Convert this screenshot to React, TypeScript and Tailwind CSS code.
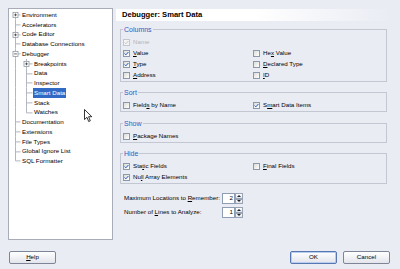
import React from "react";

type TreeNode = {
  label: string;
  level: 0 | 1;
  exp?: "+" | "-";
  first?: boolean;
  last?: boolean;
  selected?: boolean;
};

const nodes: TreeNode[] = [
  { label: "Environment", level: 0, exp: "+", first: true },
  { label: "Accelerators", level: 0 },
  { label: "Code Editor", level: 0, exp: "+" },
  { label: "Database Connections", level: 0 },
  { label: "Debugger", level: 0, exp: "-" },
  { label: "Breakpoints", level: 1, exp: "+" },
  { label: "Data", level: 1 },
  { label: "Inspector", level: 1 },
  { label: "Smart Data", level: 1, selected: true },
  { label: "Stack", level: 1 },
  { label: "Watches", level: 1, last: true },
  { label: "Documentation", level: 0 },
  { label: "Extensions", level: 0 },
  { label: "File Types", level: 0 },
  { label: "Global Ignore List", level: 0 },
  { label: "SQL Formatter", level: 0, last: true },
];

const H = 9.75;
const C = H / 2;
const LINE = "#b2b6be";

function ExpBox({ cx, sign }: { cx: number; sign: "+" | "-" }) {
  return (
    <g>
      <rect x={cx - 2.5} y={C - 2.5} width={5} height={5} fill="#fff" stroke="#8e98a4" strokeWidth={0.8} />
      <line x1={cx - 1.4} y1={C} x2={cx + 1.4} y2={C} stroke="#2a2a2a" strokeWidth={0.7} />
      {sign === "+" && <line x1={cx} y1={C - 1.4} x2={cx} y2={C + 1.4} stroke="#2a2a2a" strokeWidth={0.7} />}
    </g>
  );
}

function Gutter0({ n }: { n: TreeNode }) {
  const x = 6.5;
  const isChild = n.level === 1;
  return (
    <svg width={12} height={H} className="shrink-0 block">
      <line x1={x} y1={n.first ? C : 0} x2={x} y2={n.last && !isChild ? C : H} stroke={LINE} strokeWidth={1} />
      {!isChild && <line x1={x} y1={C} x2={11.5} y2={C} stroke={LINE} strokeWidth={1} />}
      {!isChild && n.exp && <ExpBox cx={x} sign={n.exp} />}
    </svg>
  );
}

function Gutter1({ n }: { n: TreeNode }) {
  const x = 5.5;
  return (
    <svg width={12} height={H} className="shrink-0 block">
      <line x1={x} y1={0} x2={x} y2={n.last ? C : H} stroke={LINE} strokeWidth={1} />
      <line x1={x} y1={C} x2={11.5} y2={C} stroke={LINE} strokeWidth={1} />
      {n.exp && <ExpBox cx={x} sign={n.exp} />}
    </svg>
  );
}

function Tree() {
  return (
    <div className="relative w-[105px] h-[232px] bg-white border border-[#a7acb8] pt-[1px] shrink-0">
      {nodes.map((n) => (
        <div key={n.label} className="flex items-center h-[9.75px]">
          <Gutter0 n={n} />
          {n.level === 1 && <Gutter1 n={n} />}
          <span
            className={`px-[1px] h-[9.75px] flex items-center text-[6.2px] leading-none whitespace-nowrap ${
              n.selected ? "bg-[#316ac5] text-white" : "text-black"
            }`}
          >
            {n.label}
          </span>
        </div>
      ))}
      <svg width={9} height={14} viewBox="0 0 9 14" className="absolute left-[75px] top-[100px]">
        <path d="M0.5 0.5 L0.5 10.5 L3 8.3 L4.7 12.5 L6.3 11.8 L4.6 7.7 L7.8 7.7 Z" fill="#fff" stroke="#000" strokeWidth={0.8} strokeLinejoin="round" />
      </svg>
    </div>
  );
}

function CheckBox({ checked, disabled }: { checked?: boolean; disabled?: boolean }) {
  return (
    <span
      className={`w-[7px] h-[7px] shrink-0 border flex items-center justify-center ${
        disabled
          ? "border-[#c4c7cd] bg-[#f4f4f4]"
          : "border-[#8d98ab] bg-gradient-to-br from-[#dcdcd6] to-white"
      }`}
    >
      {checked && (
        <svg width={5} height={5} viewBox="0 0 5 5">
          <path d="M0.6 2.5 L1.9 3.8 L4.4 1" fill="none" stroke={disabled ? "#c2c2c2" : "#2257c0"} strokeWidth={1} />
        </svg>
      )}
    </span>
  );
}

function Check({
  children,
  checked,
  disabled,
}: {
  children: React.ReactNode;
  checked?: boolean;
  disabled?: boolean;
}) {
  return (
    <div className="flex items-center h-[11px] gap-[3px]">
      <CheckBox checked={checked} disabled={disabled} />
      <span className={`text-[6.2px] leading-none whitespace-nowrap ${disabled ? "text-[#b4b4b4]" : "text-black"}`}>
        {children}
      </span>
    </div>
  );
}

function Group({
  title,
  children,
  className,
}: {
  title: string;
  children: React.ReactNode;
  className: string;
}) {
  return (
    <fieldset className={`mx-[4px] border border-[#c3c7d2] px-[2px] pt-[3px] pb-0 ${className}`}>
      <legend className="px-[1px] text-[7px] leading-[9px] text-[#2d5cc0]">{title}</legend>
      {children}
    </fieldset>
  );
}

function Spinner({ value }: { value: string }) {
  return (
    <div className="flex h-[11px]">
      <div className="w-[13px] h-[11px] bg-white border border-[#8f9db4] flex items-center justify-end pr-[1px] text-[6.2px] leading-none">
        {value}
      </div>
      <div className="w-[8px] h-[11px] flex flex-col">
        {[0, 1].map((i) => (
          <div
            key={i}
            className="h-[5.5px] border border-[#9aa3b3] bg-gradient-to-b from-white to-[#dfe2ea] flex items-center justify-center"
          >
            <svg width={4} height={2} viewBox="0 0 4 2">
              <path d={i === 0 ? "M0 2 L2 0 L4 2 Z" : "M0 0 L2 2 L4 0 Z"} fill="#222" />
            </svg>
          </div>
        ))}
      </div>
    </div>
  );
}

function Btn({ children, def }: { children: React.ReactNode; def?: boolean }) {
  return (
    <div
      className={`w-[47px] h-[13px] rounded-[2px] border flex items-center justify-center text-[6.2px] leading-none text-black bg-gradient-to-b from-white to-[#e3e5ec] ${
        def ? "border-[#5677b0] shadow-[inset_0_0_0_1px_#b8cdf0]" : "border-[#7e8596]"
      }`}
    >
      {children}
    </div>
  );
}

export default function App() {
  return (
    <div className="w-[400px] h-[269px] bg-[#eaecf4] flex flex-col overflow-hidden font-['Liberation_Sans',Arial,sans-serif] text-black">
      <div className="flex pt-[8px] pl-[8px] h-[240px]">
        <Tree />
        <div className="ml-[3px] w-[275px] flex flex-col pt-[1px]">
          <div className="h-[12px] flex items-center pl-[6px] bg-gradient-to-r from-white via-white to-[#eaecf4] text-[7.6px] font-bold leading-none">
            Debugger: Smart Data
          </div>

          <Group title="Columns" className="mt-[4px]">
            <div className="grid grid-cols-[130px_1fr]">
              <Check checked disabled>Name</Check>
              <div />
              <Check checked><u>V</u>alue</Check>
              <Check>He<u>x</u> Value</Check>
              <Check checked><u>T</u>ype</Check>
              <Check><u>D</u>eclared Type</Check>
              <Check><u>A</u>ddress</Check>
              <Check><u>I</u>D</Check>
            </div>
          </Group>

          <Group title="Sort" className="mt-[6px]">
            <div className="grid grid-cols-[130px_1fr]">
              <Check>Field<u>s</u> by Name</Check>
              <Check checked>S<u>m</u>art Data Items</Check>
            </div>
          </Group>

          <Group title="Show" className="mt-[7px]">
            <div className="grid grid-cols-[130px_1fr]">
              <Check><u>P</u>ackage Names</Check>
            </div>
          </Group>

          <Group title="Hide" className="mt-[6px]">
            <div className="grid grid-cols-[130px_1fr]">
              <Check checked>Sta<u>t</u>ic Fields</Check>
              <Check><u>F</u>inal Fields</Check>
              <Check checked>Nu<u>l</u>l Array Elements</Check>
            </div>
          </Group>

          <div className="mt-[9px] ml-[8px] flex flex-col gap-[3px]">
            <div className="flex items-center h-[11px]">
              <span className="w-[98px] text-[6.2px] leading-none whitespace-nowrap">
                Maximum Locations to <u>R</u>emember:
              </span>
              <Spinner value="2" />
            </div>
            <div className="flex items-center h-[11px]">
              <span className="w-[98px] text-[6.2px] leading-none whitespace-nowrap">
                Number of <u>L</u>ines to Analyze:
              </span>
              <Spinner value="1" />
            </div>
          </div>
        </div>
      </div>

      <div className="flex items-start mt-[11px] pl-[9px] pr-[10px]">
        <div className="w-[48px]">
          <Btn><u>H</u>elp</Btn>
        </div>
        <div className="ml-auto flex gap-[6px]">
          <Btn def>OK</Btn>
          <Btn>Cancel</Btn>
        </div>
      </div>
    </div>
  );
}
